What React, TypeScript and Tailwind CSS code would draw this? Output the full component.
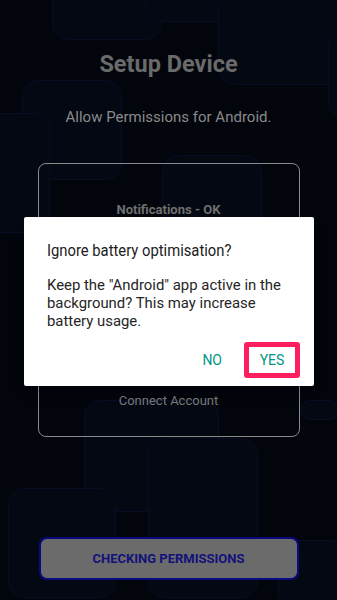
import React from "react";

const font = { fontFamily: "Roboto, 'Noto Sans', sans-serif" };

function Backdrop() {
  // faint rounded squares in the background pattern
  const shapes = [
    "left-[52px] top-[-30px] w-[110px] h-[70px]",
    "left-[145px] top-[-20px] w-[100px] h-[42px]",
    "left-[218px] top-[-10px] w-[130px] h-[95px]",
    "left-[22px] top-[80px] w-[100px] h-[100px]",
    "left-[-40px] top-[113px] w-[90px] h-[120px]",
    "left-[162px] top-[155px] w-[100px] h-[120px]",
    "left-[328px] top-[30px] w-[60px] h-[90px]",
    "left-[84px] top-[400px] w-[135px] h-[112px]",
    "left-[148px] top-[438px] w-[110px] h-[160px]",
    "left-[8px] top-[488px] w-[108px] h-[110px]",
    "left-[300px] top-[400px] w-[40px] h-[20px]",
    "left-[278px] top-[540px] w-[70px] h-[70px]",
  ];
  return (
    <div className="absolute inset-0 overflow-hidden">
      {shapes.map((s, i) => (
        <div
          key={i}
          className={`absolute rounded-[16px] border border-[#050e22] bg-[#030812] ${s}`}
        />
      ))}
    </div>
  );
}

export default function App() {
  return (
    <div className="relative h-[600px] w-[337px] overflow-hidden bg-[#02050c]" style={font}>
      <Backdrop />
      <div className="relative flex h-full flex-col items-center">
        <h1 className="mt-[49px] text-[23.5px] font-bold leading-[30px] text-[#6a6a6a]">Setup Device</h1>
        <p className="mt-[28px] text-[15px] leading-[20px] text-[#8a8a8a]">Allow Permissions for Android.</p>
        <div className="mt-[36px] flex h-[274px] w-[262px] flex-col items-center rounded-[8px] border-[1.5px] border-[#8a8a8a]">
          <div className="mt-[36px] text-[13px] font-bold text-[#6f6f6f]">Notifications - OK</div>
          <div className="mt-auto mb-[26px] text-[13px] text-[#7a7a7a]">Connect Account</div>
        </div>
        <button className="mt-[100px] flex h-[43px] w-[260px] items-center justify-center rounded-[8px] border-2 border-[#0a0a80] bg-[#6b6b6b] text-[13px] font-bold text-[#12127a]">
          CHECKING PERMISSIONS
        </button>
      </div>

      <div className="absolute left-[24px] top-[217px] w-[290px] rounded-[2px] bg-white px-[23px] pt-[21px] pb-[8px] shadow-lg">
        <div className="origin-left scale-x-[0.87] whitespace-nowrap text-[17px] leading-[24px] text-[#212121]">
          Ignore battery optimisation?
        </div>
        <p className="mt-[14px] text-[14.9px] leading-[18px] text-[#262626]">
          Keep the "Android" app active in the background? This may increase battery usage.
        </p>
        <div className="mt-[12px] mr-[-9px] flex items-center justify-end gap-[18px]">
          <span className="px-[4px] text-[14px] text-[#009688]">NO</span>
          <span className="flex h-[36px] w-[56px] items-center justify-center rounded-[3px] border-[5px] border-[#ff1f5f] text-[14px] text-[#009688]">
            YES
          </span>
        </div>
      </div>
    </div>
  );
}
